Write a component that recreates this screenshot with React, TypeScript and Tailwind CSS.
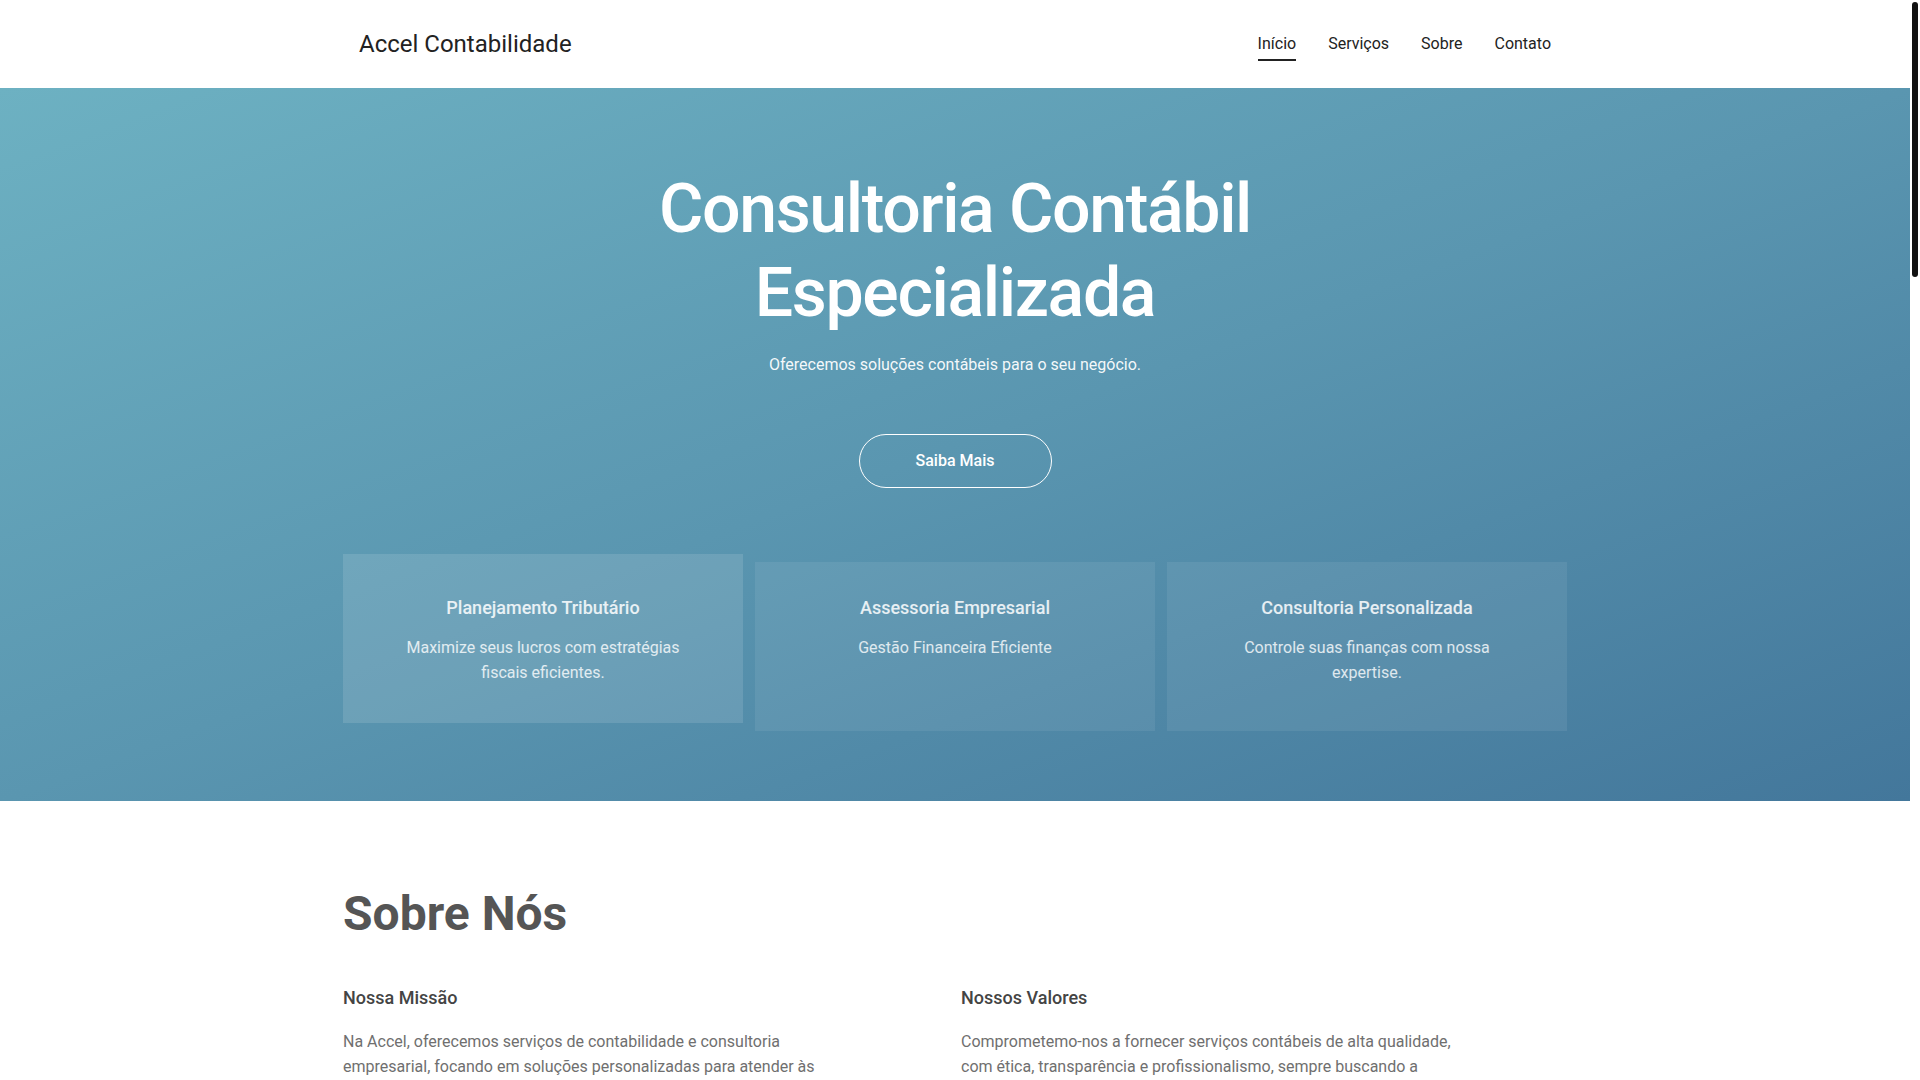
import React from "react";

const services = [
  {
    title: "Planejamento Tributário",
    text: "Maximize seus lucros com estratégias fiscais eficientes.",
  },
  {
    title: "Assessoria Empresarial",
    text: "Gestão Financeira Eficiente",
  },
  {
    title: "Consultoria Personalizada",
    text: "Controle suas finanças com nossa expertise.",
  },
];

const navItems = ["Início", "Serviços", "Sobre", "Contato"];

const App: React.FC = () => {
  return (
    <div className="h-screen overflow-hidden flex bg-white text-[#222] font-['Roboto',sans-serif]">
      <main className="flex-1 min-w-0">
        {/* Header */}
        <header className="h-[88px] bg-white">
          <div className="w-[1224px] mx-auto h-full px-4 flex items-center justify-between">
            <span className="text-[24px] text-[#222]">Accel Contabilidade</span>
            <nav className="flex items-center gap-8 text-[16px] text-[#222]">
              {navItems.map((item, i) => (
                <a
                  key={item}
                  href="#"
                  className={
                    i === 0
                      ? "relative after:absolute after:left-0 after:right-0 after:-bottom-[5px] after:h-[2px] after:bg-[#222]"
                      : ""
                  }
                >
                  {item}
                </a>
              ))}
            </nav>
          </div>
        </header>

        {/* Hero */}
        <section className="bg-linear-to-br from-[#6db1c2] via-[#5a96b0] to-[#43779b] pt-[79px] pb-[70px]">
          <div className="w-[1224px] mx-auto text-center text-white">
            <h1 className="text-[68px] leading-[84px] font-medium tracking-[-0.02em]">
              Consultoria Contábil
              <br />
              Especializada
            </h1>
            <p className="mt-4 text-[16px] leading-[27px] text-white/95">
              Oferecemos soluções contábeis para o seu negócio.
            </p>
            <button className="mt-[56px] w-[193px] h-[54px] rounded-full border border-white text-[16px] font-medium text-white">
              Saiba Mais
            </button>

            <div className="mt-[66px] grid grid-cols-3 gap-3 text-center">
              {services.map((s, i) => (
                <div
                  key={s.title}
                  className={
                    i === 0
                      ? "bg-white/[0.12] px-12 pt-10 pb-[38px] mb-2"
                      : "bg-white/[0.07] px-12 pt-8 pb-[38px] mt-2"
                  }
                >
                  <h3 className="text-[18px] leading-[27px] font-medium text-white/85">
                    {s.title}
                  </h3>
                  <p className="mt-3.5 text-[16px] leading-[25px] text-white/80">
                    {s.text}
                  </p>
                </div>
              ))}
            </div>
          </div>
        </section>

        {/* Sobre */}
        <section className="pt-[84px] pb-24">
          <div className="w-[1224px] mx-auto">
            <h2 className="text-[48px] leading-[58px] font-bold text-[#555]">Sobre Nós</h2>
            <div className="mt-[44px] grid grid-cols-2 gap-3">
              <div>
                <h3 className="text-[18px] leading-[22px] font-medium text-[#444]">
                  Nossa Missão
                </h3>
                <p className="mt-5 max-w-[500px] text-[16px] leading-[25px] text-[#6f6f6f]">
                  Na Accel, oferecemos serviços de contabilidade e consultoria
                  empresarial, focando em soluções personalizadas para atender às
                  necessidades específicas de cada cliente.
                </p>
              </div>
              <div>
                <h3 className="text-[18px] leading-[22px] font-medium text-[#444]">
                  Nossos Valores
                </h3>
                <p className="mt-5 max-w-[500px] text-[16px] leading-[25px] text-[#6f6f6f]">
                  Comprometemo-nos a fornecer serviços contábeis de alta qualidade,
                  com ética, transparência e profissionalismo, sempre buscando a
                  excelência.
                </p>
              </div>
            </div>
          </div>
        </section>
      </main>

      {/* Page scrollbar */}
      <aside className="w-[10px] shrink-0 bg-white pt-[2px] flex justify-center">
        <div className="w-[6px] h-[275px] rounded-full bg-[#111]" />
      </aside>
    </div>
  );
};

export default App;
